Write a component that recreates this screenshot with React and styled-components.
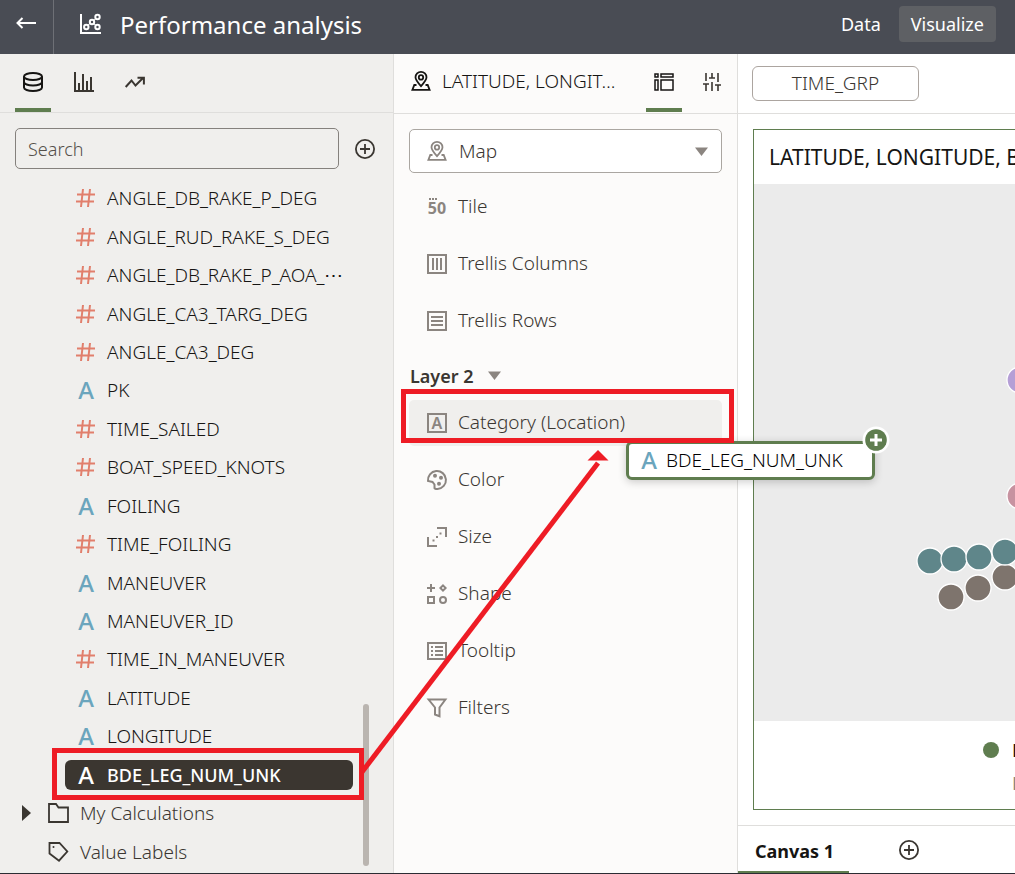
import React from "react";
import styled, { createGlobalStyle } from "styled-components";

const c = {
  header: "#494c54",
  green: "#5f7d4f",
  red: "#ee1c25",
  ink: "#161513",
  text: "#3a3631",
  icon: "#8b8580",
  line: "#dfdedc",
};

const GlobalStyle = createGlobalStyle`
  *, *::before, *::after { box-sizing: border-box; }
  body { margin: 0; font-family: "Noto Sans", "Open Sans", sans-serif; font-size: 18px; color: ${c.text}; }
  button, input, select { font: inherit; color: inherit; }
  button { border: 0; background: none; padding: 0; cursor: pointer; text-align: left; }
  ul { list-style: none; margin: 0; padding: 0; }
  h1, h2, h3 { margin: 0; font-weight: 400; }
  svg { display: block; flex: none; overflow: visible; }
`;

const Page = styled.div`
  position: relative;
  display: flex;
  flex-direction: column;
  min-height: 100vh;
  overflow: hidden;
  border-bottom: 1px solid #2b2c33;
`;

const Header = styled.header`
  display: flex;
  align-items: center;
  height: 54px;
  padding-right: 19px;
  background: ${c.header};
  color: #fff;
`;

const BackButton = styled.button`
  display: flex;
  align-items: center;
  width: 54px;
  height: 54px;
  padding: 0 0 8px 16px;
  border-right: 1px solid #6e7076;
`;

const Title = styled.h1`
  display: flex;
  flex: 1;
  align-items: center;
  gap: 18px;
  padding-left: 25px;
  padding-bottom: 4px;
  font-size: 24px;
  line-height: 32px;
`;

const ModeButton = styled.button`
  height: 36px;
  margin-bottom: 6px;
  padding: 0 12px;
  border-radius: 4px;
  background: ${(p) => (p.$active ? "#5e6064" : "transparent")};
`;

const ModeBar = styled.nav`
  display: flex;
  gap: 6px;
`;

const Body = styled.main`
  display: grid;
  flex: 1;
  grid-template-columns: 394px 344px minmax(0, 1fr);
`;

const DataPanel = styled.section`
  position: relative;
  display: flex;
  flex-direction: column;
  background: #f0efed;
  border-right: 1px solid ${c.line};
`;

const TabRow = styled.div`
  display: flex;
  align-items: stretch;
  gap: 15px;
  height: 59px;
  padding: 0 15px;
  border-bottom: 1px solid ${c.line};
`;

const IconTab = styled.button`
  display: flex;
  align-items: center;
  justify-content: center;
  width: 36px;
  padding-top: 2px;
  border-bottom: 4px solid ${(p) => (p.$active ? c.green : "transparent")};
  color: ${(p) => (p.$active ? c.ink : c.text)};
`;

const SearchRow = styled.div`
  display: flex;
  align-items: center;
  gap: 16px;
  padding: 15px 16px 10px 15px;
`;

const SearchInput = styled.input`
  width: 324px;
  height: 41px;
  padding: 0 12px;
  border: 1px solid #85817d;
  border-radius: 5px;
  background: transparent;
  font-weight: 300;
  &::placeholder { color: #55504b; opacity: 1; }
`;

const FieldList = styled.ul`
  display: flex;
  flex: 1;
  flex-direction: column;
  padding-bottom: 2px;
`;

const FieldItem = styled.li`
  display: flex;
  flex: 1 0 38px;
  align-items: center;
  padding: 0 40px 0 65px;
`;

const Field = styled.button`
  display: flex;
  align-items: center;
  gap: 11px;
  width: 100%;
  height: 30px;
  padding-left: 11px;
  border-radius: 6px;
  white-space: nowrap;
  font-size: ${(p) => (p.$selected ? "18px" : "19px")};
  font-weight: ${(p) => (p.$selected ? 500 : 300)};
  color: ${(p) => (p.$selected ? "#fff" : c.ink)};
  background: ${(p) => (p.$selected ? "#3b3630" : "transparent")};
`;

const Letter = styled.span`
  width: 20px;
  text-align: center;
  font-size: 24px;
  line-height: 28px;
  font-weight: 500;
  color: ${(p) => (p.$inverse ? "#fff" : "#6ba5bd")};
`;

const FolderItem = styled(FieldItem)`
  padding-left: 22px;
`;

const Folder = styled.button`
  display: flex;
  align-items: center;
  gap: 11px;
  font-size: 19px;
  font-weight: 300;
`;

const Disclosure = styled.span`
  display: flex;
  width: 15px;
`;

const ScrollThumb = styled.div`
  position: absolute;
  right: 24px;
  bottom: 7px;
  width: 6px;
  height: 162px;
  border-radius: 3px;
  background: #bab5b0;
`;

const GrammarPanel = styled.section`
  background: #fcfbfa;
  border-right: 1px solid ${c.line};
`;

const GrammarHeader = styled.div`
  display: flex;
  align-items: stretch;
  gap: 12px;
  height: 60px;
  padding: 0 7px 1px 17px;
  border-bottom: 1px solid ${c.line};
`;

const GrammarTitle = styled.h2`
  display: flex;
  flex: 1;
  align-items: center;
  gap: 11px;
  min-width: 0;
  padding-bottom: 4px;
  font-size: 19px;
  font-weight: 300;
  white-space: nowrap;
  color: ${c.ink};
`;

const GrammarBody = styled.div`
  padding: 15px 15px 20px;
`;

const SelectWrap = styled.label`
  display: grid;
  align-items: center;
  height: 44px;
  margin-bottom: 11px;
  & > * { grid-area: 1 / 1; }
  & > svg { pointer-events: none; z-index: 1; margin-left: 18px; color: ${c.icon}; }
  & > svg:last-child { margin-left: auto; margin-right: 14px; }
`;

const VizSelect = styled.select`
  appearance: none;
  width: 100%;
  height: 44px;
  padding: 0 40px 0 49px;
  border: 1px solid #aaa6a1;
  border-radius: 5px;
  background: #fff;
  font-size: 19px;
  font-weight: 300;
`;

const SlotList = styled.ul`
  display: grid;
  gap: 11px;
`;

const Slot = styled.button`
  display: flex;
  align-items: center;
  gap: 11px;
  width: 100%;
  height: 46px;
  padding-left: 18px;
  border-radius: 5px;
  background: ${(p) => (p.$target ? "#f0efed" : "transparent")};
  font-size: 19px;
  font-weight: 300;
  & > svg { color: ${c.icon}; }
`;

const SlotLabel = styled.span`
  padding-bottom: 2px;
`;

const LayerHeading = styled.h3`
  display: flex;
  align-items: center;
  gap: 14px;
  height: 56px;
  padding: 7px 1px 0;
  font-size: 18px;
  font-weight: 600;
`;

const Workspace = styled.section`
  display: flex;
  flex-direction: column;
  background: #fff;
  overflow: hidden;
`;

const FilterBar = styled.div`
  display: flex;
  align-items: center;
  height: 60px;
  padding: 0 14px;
  border-bottom: 1px solid ${c.line};
`;

const FilterChip = styled.button`
  width: 167px;
  height: 35px;
  padding-bottom: 2px;
  border: 1px solid #aca5a0;
  border-radius: 6px;
  text-align: center;
  font-size: 19px;
  line-height: 30px;
  font-weight: 300;
`;

const VizCard = styled.article`
  display: flex;
  flex: 1;
  flex-direction: column;
  min-width: 640px;
  margin: 15px;
  border: 1px solid ${c.green};
`;

const VizTitle = styled.h2`
  height: 54px;
  padding: 0 15px;
  font-size: 21px;
  line-height: 54px;
  color: ${c.ink};
  white-space: nowrap;
`;

const MapArea = styled.div`
  flex: 1;
  background: #ebebeb;
  & > svg { width: 100%; height: 100%; min-height: 480px; }
`;

const Legend = styled.div`
  height: 88px;
  padding: 12px 0 0 229px;
`;

const LegendRow = styled.div`
  display: flex;
  align-items: center;
  gap: 13px;
  height: 33px;
  color: ${(p) => (p.$muted ? c.icon : c.ink)};
  padding-left: ${(p) => (p.$muted ? "29px" : "0")};
`;

const LegendDot = styled.span`
  width: 16px;
  height: 16px;
  border-radius: 50%;
  background: ${c.green};
`;

const CanvasBar = styled.footer`
  display: flex;
  gap: 50px;
  height: 48px;
  border-top: 1px solid ${c.line};
`;

const CanvasTab = styled.button`
  width: 111px;
  padding: 4px 17px 0;
  border-bottom: 2px solid ${c.green};
  font-weight: 700;
  white-space: nowrap;
  color: ${c.ink};
`;

const DragGhost = styled.div`
  position: absolute;
  left: 626px;
  top: 441px;
  display: flex;
  align-items: center;
  gap: 7px;
  width: 249px;
  height: 39px;
  padding: 0 0 2px 10px;
  border: 3px solid ${c.green};
  border-radius: 6px;
  background: #fff;
  box-shadow: 0 2px 8px rgba(0, 0, 0, 0.2);
  font-size: 19px;
  font-weight: 300;
  color: #000;
  white-space: nowrap;
`;

const DropBadge = styled.span`
  position: absolute;
  right: -18px;
  top: -18px;
`;

const Annotations = styled.svg`
  position: absolute;
  left: 0;
  top: 0;
  pointer-events: none;
`;

function Icon({ children, size = 20, w, h, stroke = 2 }) {
  const width = w || size;
  const height = h || size;
  return (
    <svg width={width} height={height} viewBox={`0 0 ${width} ${height}`} fill="none" stroke="currentColor" strokeWidth={stroke} aria-hidden="true">
      {children}
    </svg>
  );
}

const HashIcon = () => (
  <svg width="20" height="20" viewBox="0 0 20 20" fill="none" stroke="#e17f6c" strokeWidth="2" aria-hidden="true">
    <path d="M7 1 5 19M14 1 12 19M1 6.400H19M0 13.400H18" />
  </svg>
);

const PinIcon = () => (
  <Icon stroke={1.8}>
    <path d="M10 15.2C6.600 11.400 4.500 9 4.500 6.300a5.500 5.500 0 0 1 11 0C15.500 9 13.400 11.400 10 15.200Z" />
    <circle cx="10" cy="6.400" r="2.200" />
    <path d="M5.500 14H3.300L1.400 18.900H18.600L16.700 14H14.500" />
  </Icon>
);

const PlusCircle = () => (
  <Icon size={20} stroke={1.8}>
    <circle cx="10" cy="10" r="9.100" />
    <path d="M10 5V15M5 10H15" />
  </Icon>
);

const Caret = () => (
  <svg width="13" height="9" viewBox="0 0 13 9" fill={c.icon} aria-hidden="true">
    <path d="M0 .500H13L6.500 9Z" />
  </svg>
);

const slotIcons = {
  tile: (
    <svg width="20" height="20" viewBox="0 0 20 20" fill="currentColor" aria-hidden="true">
      <path d="M2 1h2v2H2zM5 1h2v2H5zM8 1h2v2H8z" />
      <text x="10" y="17" textAnchor="middle" fontSize="16" fontWeight="700" fontFamily="Noto Sans, sans-serif">50</text>
    </svg>
  ),
  columns: (
    <Icon><path d="M1 1H19V19H1ZM6 4V16M10 4V16M14 4V16" /></Icon>
  ),
  rows: (
    <Icon><path d="M1 1H19V19H1ZM4 6H16M4 10H16M4 14H16" /></Icon>
  ),
  category: (
    <svg width="20" height="20" viewBox="0 0 20 20" fill="currentColor" aria-hidden="true">
      <path d="M1 1H19V19H1Z" fill="none" stroke="currentColor" strokeWidth="2" />
      <text x="10" y="16" textAnchor="middle" fontSize="16" fontWeight="600" fontFamily="Noto Sans, sans-serif">A</text>
    </svg>
  ),
  color: (
    <Icon>
      <path d="M1 11A9 9 0 1 1 10.500 19C8.500 19 7.500 18.600 7.500 18.200V14.500L5.500 12Z" />
      <g fill="currentColor" stroke="none">
        <circle cx="8" cy="5.800" r="2" /><circle cx="14" cy="7.800" r="2" /><circle cx="12" cy="13.800" r="2" />
      </g>
    </Icon>
  ),
  size: (
    <Icon>
      <path d="M10 1H19V10M1 10V19H10" />
      <path d="M5.500 13.500h2M9 10h2M12.500 6.500h2" strokeWidth="1.800" />
    </Icon>
  ),
  shape: (
    <Icon>
      <path d="M4 0V8M0 4H8M16 1.400 18.600 4 16 6.600 13.400 4ZM1 13H7V19H1Z" />
      <circle cx="16" cy="16" r="3" />
    </Icon>
  ),
  tooltip: (
    <Icon>
      <path d="M1 2H19V18H1ZM4 6h2M8 6h8M4 10h2M8 10h8M4 14h2M8 14h8" />
    </Icon>
  ),
  filters: (
    <Icon><path d="M1.600 1.500H18.400L12.500 9.500V18.200L8 16.500V9.500Z" /></Icon>
  ),
};

const fields = [
  ["#", "ANGLE_DB_RAKE_P_DEG"],
  ["#", "ANGLE_RUD_RAKE_S_DEG"],
  ["#", "ANGLE_DB_RAKE_P_AOA_⋯"],
  ["#", "ANGLE_CA3_TARG_DEG"],
  ["#", "ANGLE_CA3_DEG"],
  ["A", "PK"],
  ["#", "TIME_SAILED"],
  ["#", "BOAT_SPEED_KNOTS"],
  ["A", "FOILING"],
  ["#", "TIME_FOILING"],
  ["A", "MANEUVER"],
  ["A", "MANEUVER_ID"],
  ["#", "TIME_IN_MANEUVER"],
  ["A", "LATITUDE"],
  ["A", "LONGITUDE"],
  ["A", "BDE_LEG_NUM_UNK", true],
];

const vizSlots = [
  ["tile", "Tile"],
  ["columns", "Trellis Columns"],
  ["rows", "Trellis Rows"],
];

const layerSlots = [
  ["category", "Category (Location)", true],
  ["color", "Color"],
  ["size", "Size"],
  ["shape", "Shape"],
  ["tooltip", "Tooltip"],
  ["filters", "Filters"],
];

const points = [
  [197, 413, "#7e746d"],
  [224, 404, "#7e746d"],
  [251, 393, "#7e746d"],
  [176, 377, "#5f868a"],
  [200, 375, "#5f868a"],
  [225, 373, "#5f868a"],
  [251, 368, "#5f868a"],
  [266, 196, "#b59fd6"],
  [266, 312, "#c792a0"],
];

const Slots = ({ items }) => (
  <SlotList>
    {items.map(([icon, label, target]) => (
      <li key={label}>
        <Slot $target={target}>
          {slotIcons[icon]}
          <SlotLabel>{label}</SlotLabel>
        </Slot>
      </li>
    ))}
  </SlotList>
);

export default function App() {
  return (
    <Page>
      <GlobalStyle />
      <Header>
        <BackButton aria-label="Back">
          <Icon w={20} h={12}><path d="M20 6H1.500M6.500 1 1.500 6 6.500 11" /></Icon>
        </BackButton>
        <Title>
          <Icon w={23} h={23}>
            <path d="M2 0V19H22" />
            <path d="M8.500 11.500 11.500 9M14.500 6.500 17 4.500M14.500 9.500 17 11.500" strokeWidth="1" />
            <circle cx="7.300" cy="13" r="2.200" />
            <circle cx="13" cy="8" r="2.200" />
            <circle cx="18.500" cy="3" r="2.200" />
            <circle cx="18.500" cy="13" r="2.200" />
          </Icon>
          Performance analysis
        </Title>
        <ModeBar>
          <ModeButton>Data</ModeButton>
          <ModeButton $active>Visualize</ModeButton>
        </ModeBar>
      </Header>

      <Body>
        <DataPanel>
          <TabRow>
            <IconTab $active aria-label="Data">
              <Icon>
                <ellipse cx="10" cy="4.500" rx="9" ry="3.500" />
                <path d="M1 4.500V15.500C1 17.500 5 19 10 19S19 17.500 19 15.500V4.500M1 10C1 12 5 13.500 10 13.500S19 12 19 10" />
              </Icon>
            </IconTab>
            <IconTab aria-label="Visualizations">
              <Icon><path d="M1 0V19H20M5 11V19M9 2V19M13 9V19M17 5V19" /></Icon>
            </IconTab>
            <IconTab aria-label="Analytics">
              <Icon><path d="M.700 15 6.500 8.500 10.500 13.500 18.500 5.500M12.500 5.800H18.900V12.500" /></Icon>
            </IconTab>
          </TabRow>
          <SearchRow>
            <SearchInput type="text" placeholder="Search" aria-label="Search" />
            <button aria-label="Add data"><PlusCircle /></button>
          </SearchRow>
          <FieldList>
            {fields.map(([type, name, selected]) => (
              <FieldItem key={name}>
                <Field $selected={selected}>
                  {type === "#" ? <HashIcon /> : <Letter $inverse={selected}>A</Letter>}
                  {name}
                </Field>
              </FieldItem>
            ))}
            <FolderItem>
              <Folder>
                <Disclosure>
                  <svg width="9" height="16" viewBox="0 0 9 16" fill={c.text} aria-hidden="true"><path d="M0 0 9 8 0 16Z" /></svg>
                </Disclosure>
                <Icon w={21} h={20} stroke={1.800}><path d="M1 1H8L10.500 4.500H20V19H1Z" /></Icon>
                My Calculations
              </Folder>
            </FolderItem>
            <FolderItem>
              <Folder>
                <Disclosure />
                <Icon w={21} h={20} stroke={1.800}>
                  <path d="M1.500 1H11.500L19.300 9.500 11 18.700 1.500 11.500Z" />
                  <circle cx="5.500" cy="5" r="1" fill="currentColor" stroke="none" />
                </Icon>
                Value Labels
              </Folder>
            </FolderItem>
          </FieldList>
          <ScrollThumb />
        </DataPanel>

        <GrammarPanel>
          <GrammarHeader>
            <GrammarTitle><PinIcon />LATITUDE, LONGIT…</GrammarTitle>
            <IconTab $active aria-label="Grammar">
              <Icon w={20} h={18} stroke={1.5}>
                <path d="M1 1H4V4H1ZM7 1H19V4H7ZM1 7H4V17H1ZM7 7H19V17H7Z" />
              </Icon>
            </IconTab>
            <IconTab aria-label="Properties">
              <Icon w={18} h={18} stroke={1.6}>
                <path d="M3 0V8M3 11V18M0 11H6M9 0V5M9 9V18M6 5H12M15 0V9M15 12V18M12 12H18" />
              </Icon>
            </IconTab>
          </GrammarHeader>
          <GrammarBody>
            <SelectWrap>
              <PinIcon />
              <VizSelect aria-label="Visualization type" defaultValue="Map">
                <option>Map</option>
              </VizSelect>
              <Caret />
            </SelectWrap>
            <Slots items={vizSlots} />
            <LayerHeading>Layer 2 <Caret /></LayerHeading>
            <Slots items={layerSlots} />
          </GrammarBody>
        </GrammarPanel>

        <Workspace>
          <FilterBar>
            <FilterChip>TIME_GRP</FilterChip>
          </FilterBar>
          <VizCard>
            <VizTitle>LATITUDE, LONGITUDE, BDE_LEG_NUM_UNK</VizTitle>
            <MapArea>
              <svg aria-label="Map of boat positions">
                {points.map(([x, y, fill]) => (
                  <circle key={`${x}-${y}`} cx={x} cy={y} r="13" fill={fill} stroke="#fff" strokeWidth="1.300" />
                ))}
              </svg>
            </MapArea>
            <Legend>
              <LegendRow><LegendDot />BDE_LEG_NUM_UNK</LegendRow>
              <LegendRow $muted>LATITUDE, LONGITUDE</LegendRow>
            </Legend>
          </VizCard>
          <CanvasBar>
            <CanvasTab>Canvas 1</CanvasTab>
            <button aria-label="Add canvas"><PlusCircle /></button>
          </CanvasBar>
        </Workspace>
      </Body>

      <DragGhost>
        <Letter>A</Letter>
        BDE_LEG_NUM_UNK
        <DropBadge>
          <svg width="28" height="28" viewBox="0 0 28 28" aria-hidden="true">
            <circle cx="14" cy="14" r="13.500" fill="#fff" />
            <circle cx="14" cy="14" r="10.800" fill={c.green} />
            <path d="M14 8V20M8 14H20" stroke="#fff" strokeWidth="3" />
          </svg>
        </DropBadge>
      </DragGhost>

      <Annotations width="740" height="804" viewBox="0 0 740 804" fill="none" stroke={c.red} strokeWidth="5" aria-hidden="true">
        <path d="M54.500 750.500H361.500V797.500H54.500ZM403.500 391.500H731.500V440.500H403.500Z" />
        <path d="M362 772 598 463" />
        <path d="M598 450 608.500 460.500H587.500Z" fill={c.red} stroke="none" />
      </Annotations>
    </Page>
  );
}
